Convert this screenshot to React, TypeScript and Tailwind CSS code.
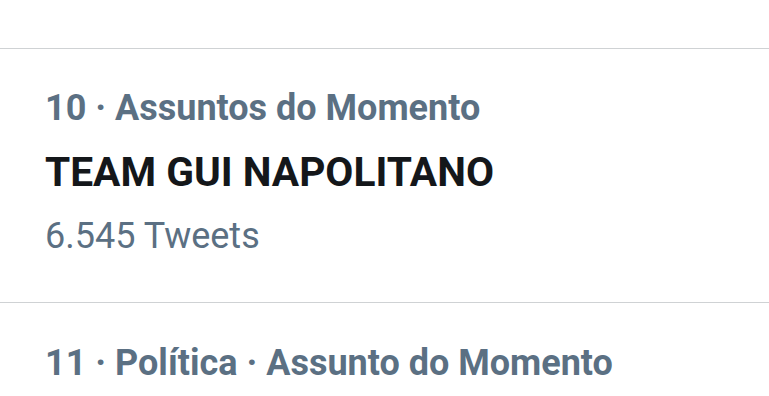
export default function App() {
  return (
    <div className="w-[769px] h-[396px] overflow-hidden bg-white font-['Roboto',sans-serif]">
      <div className="h-[48px]" />
      <div className="border-t border-[#cfd2d4]" />
      {/* Trend 10 */}
      <div className="pl-[45px] pt-[37px] pb-[44px]">
        <div className="text-[36px] leading-[44px] font-bold text-[#5b7083]">10 · Assuntos do Momento</div>
        <div className="mt-[18px] text-[40.7px] leading-[48px] font-bold text-[#14171a]">TEAM GUI NAPOLITANO</div>
        <div className="mt-[18px] text-[36px] leading-[44px] text-[#5b7083]">6.545 Tweets</div>
      </div>
      <div className="border-t border-[#cfd2d4]" />
      {/* Trend 11 */}
      <div className="pl-[45px] pt-[38px]">
        <div className="text-[36px] leading-[44px] font-bold text-[#5b7083]">11 · Política · Assunto do Momento</div>
      </div>
    </div>
  );
}
